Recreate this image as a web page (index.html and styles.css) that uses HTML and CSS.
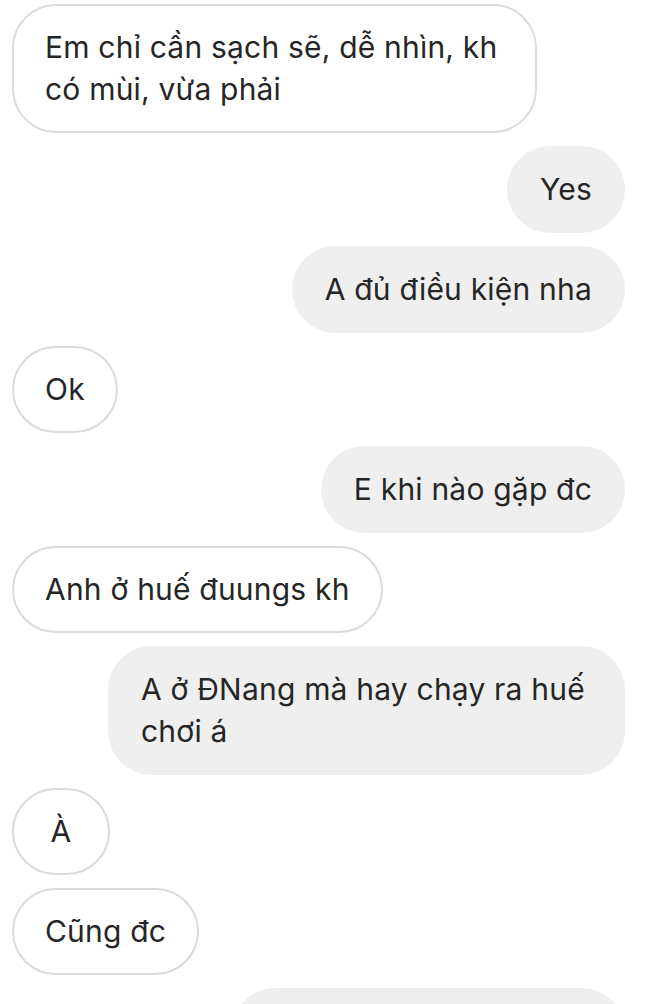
FILE: index.html
```html
<!DOCTYPE html>
<html lang="vi">
<head>
<meta charset="utf-8">
<title>Chat</title>
<link rel="stylesheet" href="styles.css">
</head>
<body>
<div class="thread">
  <div class="msg in">Em chỉ cần sạch sẽ, dễ nhìn, kh có mùi, vừa phải</div>
  <div class="msg out">Yes</div>
  <div class="msg out">A đủ điều kiện nha</div>
  <div class="msg in">Ok</div>
  <div class="msg out">E khi nào gặp đc</div>
  <div class="msg in">Anh ở huế đuungs kh</div>
  <div class="msg out">A ở ĐNang mà hay chạy ra huế chơi á</div>
  <div class="msg in">À</div>
  <div class="msg in">Cũng đc</div>
  <div class="msg out cut">&nbsp;</div>
</div>
</body>
</html>
```

FILE: styles.css
```css
html, body {
  margin: 0;
  padding: 0;
  background: #ffffff;
}
body {
  font-family: Inter, "Noto Sans", "Liberation Sans", sans-serif;
  color: #262626;
  overflow: hidden;
  height: 1004px;
}
.thread {
  display: flex;
  flex-direction: column;
  gap: 13px;
  padding: 4px 25px 0 12px;
}
.msg {
  box-sizing: border-box;
  display: flex;
  justify-content: center;
  font-size: 30px;
  line-height: 42px;
  letter-spacing: 0.2px;
  padding: 22px 33px 23px;
  border-radius: 44px;
  min-width: 98px;
  max-width: 525px;
}
.in {
  align-self: flex-start;
  background: #ffffff;
  border: 2px solid #dbdbdb;
  padding: 20px 31px 21px;
}
.out {
  align-self: flex-end;
  background: #efefef;
  max-width: 517px;
}
.cut {
  width: 393px;
}
```
